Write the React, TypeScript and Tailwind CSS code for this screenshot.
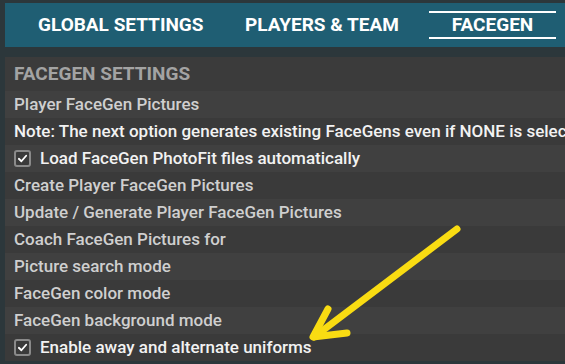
const rows: { label: string; check?: boolean; bright?: boolean }[] = [
  { label: 'Player FaceGen Pictures' },
  { label: 'Note: The next option generates existing FaceGens even if NONE is selected', bright: true },
  { label: 'Load FaceGen PhotoFit files automatically', check: true },
  { label: 'Create Player FaceGen Pictures' },
  { label: 'Update / Generate Player FaceGen Pictures' },
  { label: 'Coach FaceGen Pictures for' },
  { label: 'Picture search mode' },
  { label: 'FaceGen color mode' },
  { label: 'FaceGen background mode' },
  { label: 'Enable away and alternate uniforms', check: true },
];

function CheckBox() {
  return (
    <span className="flex h-[17px] w-[17px] shrink-0 items-center justify-center rounded-[3px] border-2 border-[#8a8a8a] bg-[#3a3a3a]">
      <svg viewBox="0 0 12 12" className="h-[11px] w-[11px]" fill="none" stroke="#ffffff" strokeWidth="2" strokeLinecap="round" strokeLinejoin="round">
        <path d="M2 6.3 L4.8 9 L10 3" />
      </svg>
    </span>
  );
}

export default function App() {
  return (
    <div className="relative h-[364px] w-[565px] overflow-hidden bg-[#2c373b] pl-[5px] pt-[3px] font-['Roboto',sans-serif]">
      {/* tab bar */}
      <div className="flex h-[44px] items-center bg-[#1f5e73] text-[19px] font-bold text-white">
        <div className="ml-[33px] w-[207px]">GLOBAL SETTINGS</div>
        <div className="w-[184px]">PLAYERS &amp; TEAM</div>
        <div className="flex h-[28px] w-[127px] items-center justify-center border-y-2 border-white">FACEGEN</div>
      </div>

      {/* settings panel */}
      <div className="mt-[10px] bg-[#3c3c3c]">
        <div className="flex h-[34px] items-center bg-[#3b3b3b] pl-[9px] text-[19px] font-bold text-[#a3a3a3]">
          FACEGEN SETTINGS
        </div>
        {rows.map((r, i) => (
          <div
            key={r.label}
            className={`flex h-[27px] items-center gap-[9px] whitespace-nowrap pl-[9px] text-[17px] font-medium ${
              i % 2 === 0 ? 'bg-[#404040]' : 'bg-[#3a3a3a]'
            } ${r.check || r.bright ? 'text-[#f2f2f2]' : 'text-[#cfcfcf]'}`}
          >
            {r.check && <CheckBox />}
            <span>{r.label}</span>
          </div>
        ))}
      </div>

      {/* annotation arrow */}
      <svg className="pointer-events-none absolute left-0 top-0" width="565" height="364" viewBox="0 0 565 364">
        <g fill="none" stroke="#f9dc12" strokeWidth="7" strokeLinecap="round" strokeLinejoin="round">
          <path d="M457 229 L314 337" />
          <path d="M328 309 L313 337 L347 333" />
        </g>
      </svg>
    </div>
  );
}
